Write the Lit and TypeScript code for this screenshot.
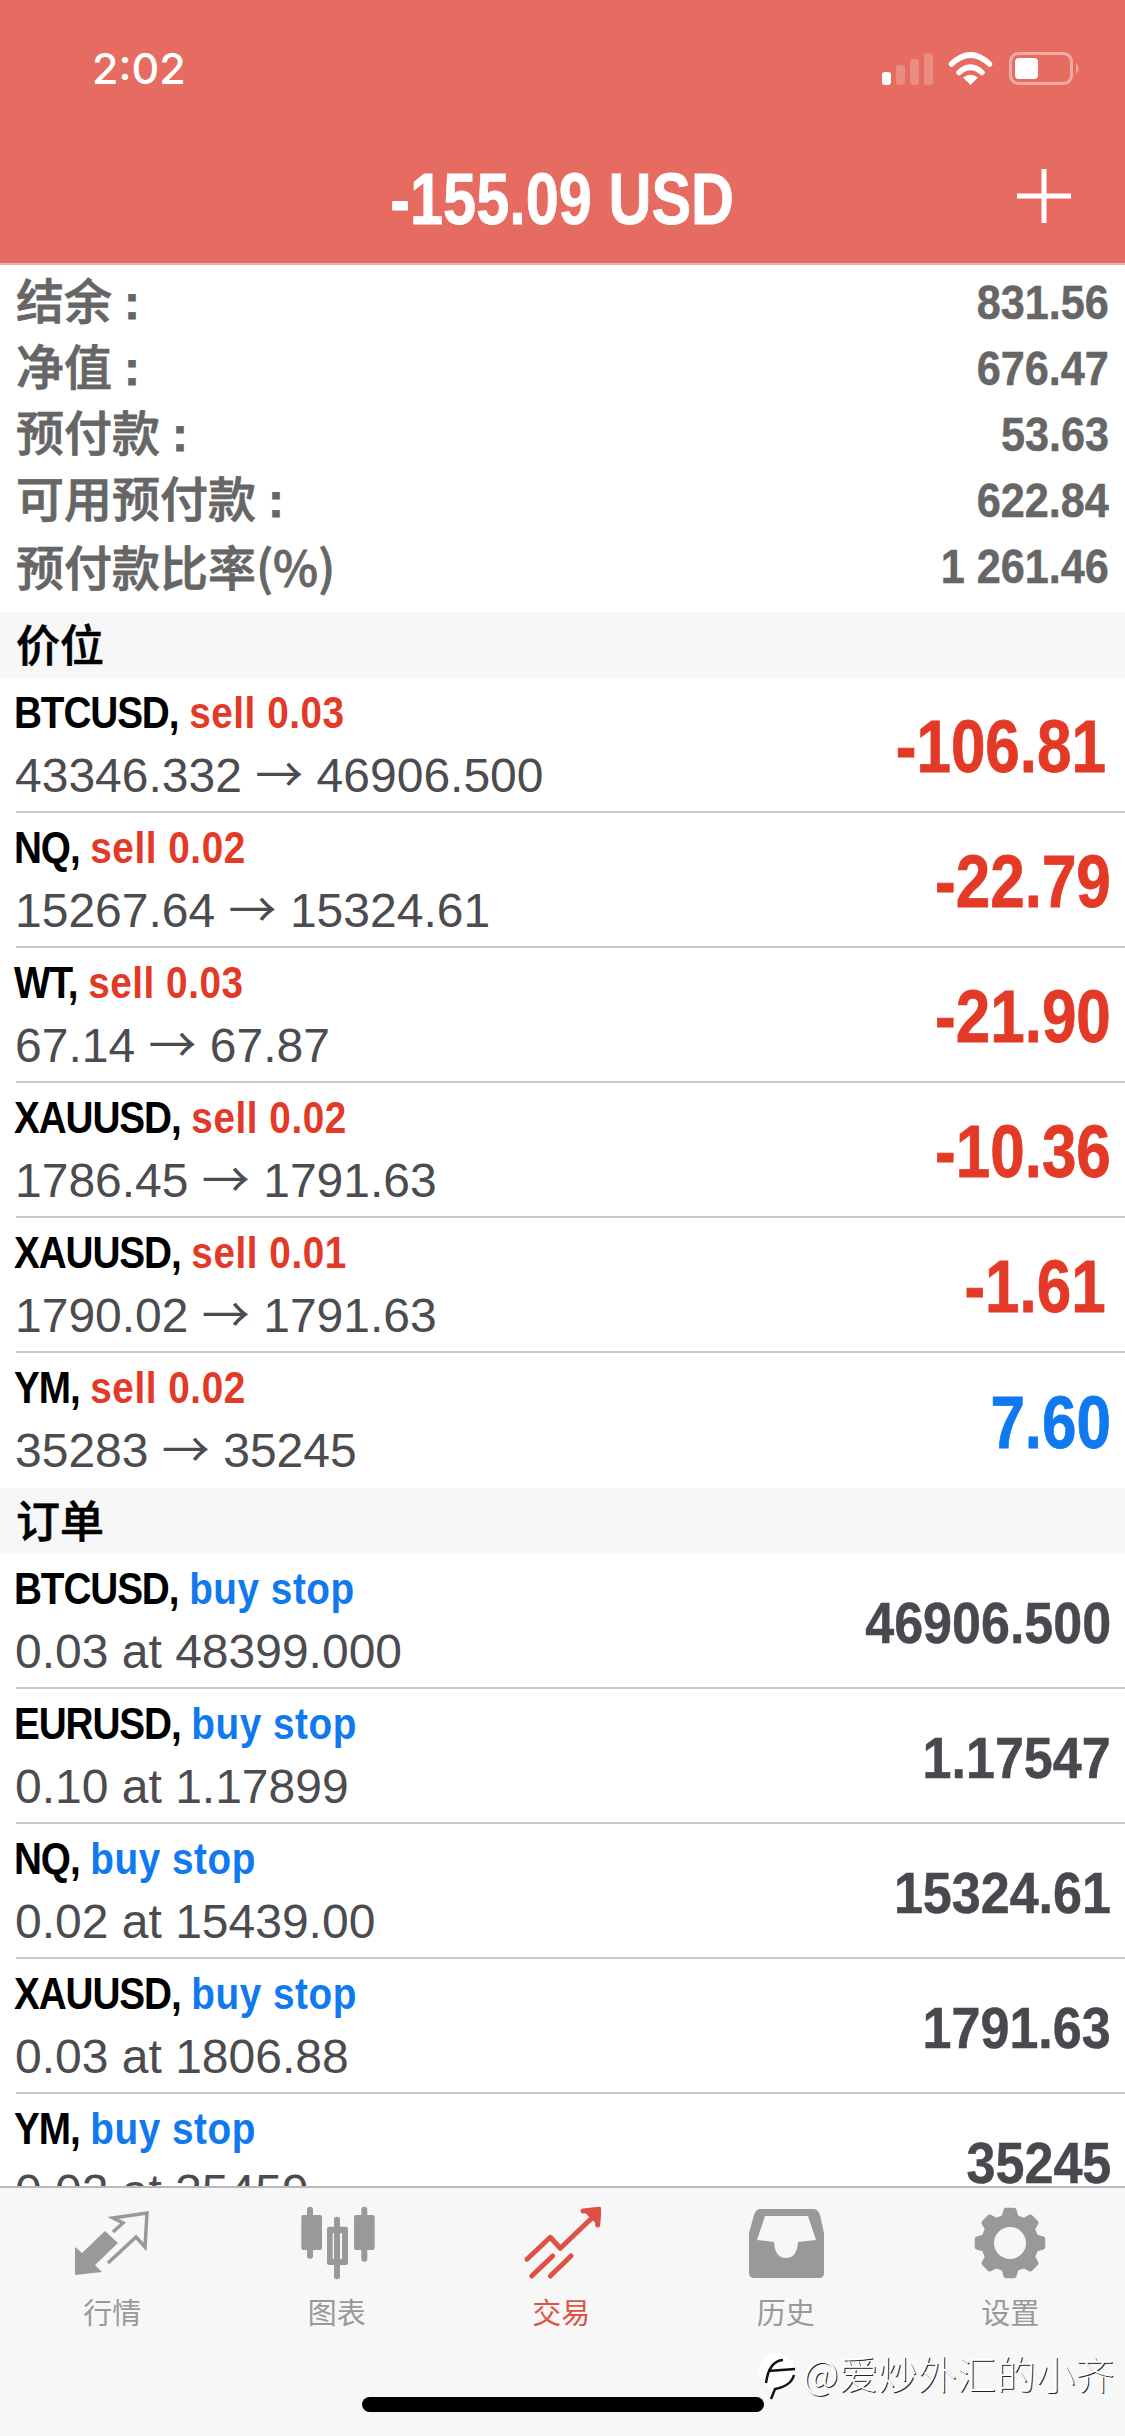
import { LitElement, html, css, svg } from "lit";
import { customElement } from "lit/decorators.js";

type Pos = { sym: string; side: string; from: string; to: string; val: string; pos: boolean };
type Ord = { sym: string; at: string; val: string };

const positions: Pos[] = [
  { sym: "BTCUSD", side: "sell 0.03", from: "43346.332", to: "46906.500", val: "-106.81", pos: false },
  { sym: "NQ", side: "sell 0.02", from: "15267.64", to: "15324.61", val: "-22.79", pos: false },
  { sym: "WT", side: "sell 0.03", from: "67.14", to: "67.87", val: "-21.90", pos: false },
  { sym: "XAUUSD", side: "sell 0.02", from: "1786.45", to: "1791.63", val: "-10.36", pos: false },
  { sym: "XAUUSD", side: "sell 0.01", from: "1790.02", to: "1791.63", val: "-1.61", pos: false },
  { sym: "YM", side: "sell 0.02", from: "35283", to: "35245", val: "7.60", pos: true },
];
const orders: Ord[] = [
  { sym: "BTCUSD", at: "0.03 at 48399.000", val: "46906.500" },
  { sym: "EURUSD", at: "0.10 at 1.17899", val: "1.17547" },
  { sym: "NQ", at: "0.02 at 15439.00", val: "15324.61" },
  { sym: "XAUUSD", at: "0.03 at 1806.88", val: "1791.63" },
  { sym: "YM", at: "0.02 at 35459", val: "35245" },
];
const stats: [string, boolean, string][] = [
  ["结余", true, "831.56"],
  ["净值", true, "676.47"],
  ["预付款", true, "53.63"],
  ["可用预付款", true, "622.84"],
  ["预付款比率(%)", false, "1 261.46"],
];

function gearPath(): string {
  const pts: string[] = [];
  for (let i = 0; i < 8; i++) {
    const a = (i * Math.PI) / 4;
    const d = Math.PI / 180;
    const list: [number, number][] = [[-13, 26.5], [-7, 33], [7, 33], [13, 26.5]];
    for (const [o, r] of list) {
      const t = a + o * d - Math.PI / 2;
      pts.push(`${(40 + r * Math.cos(t)).toFixed(1)},${(38 + r * Math.sin(t)).toFixed(1)}`);
    }
  }
  return "M" + pts.join("L") + "Z";
}

const icons = [
  svg`<path d="M3 70V42l7 6 23-22 13 12-23 22 7 7z" fill="currentColor"/><path d="M41 27l10-9-10-5 34-5-2 34-9-10-28 26" fill="none" stroke="currentColor" stroke-width="3.5"/>`,
  svg`<g fill="currentColor"><rect x="10" y="1.7" width="6" height="52" rx="3"/><rect x="4.3" y="10" width="20.7" height="35" rx="2"/><rect x="37" y="11.7" width="6" height="62.6" rx="3"/><path fill-rule="evenodd" d="M32 21.7h17a2 2 0 0 1 2 2V58a2 2 0 0 1-2 2H32a2 2 0 0 1-2-2V23.700a2 2 0 0 1 2-2zM35.700 28.300V54H45V28.300z"/><rect x="64.300" y="1.700" width="6" height="55" rx="3"/><rect x="57" y="10" width="20.700" height="35" rx="2"/></g>`,
  svg`<g fill="none" stroke="currentColor" stroke-width="5" stroke-linecap="round" stroke-linejoin="round"><path d="M6 54.300L29.300 32.300 39.300 43.300 74 10"/><path d="M10.700 71L31.700 51M29.300 71L50 51"/><path d="M62 6L78 4.300 76.700 20" fill="currentColor"/></g>`,
  svg`<path fill="currentColor" fill-rule="evenodd" d="M14 4H68Q72 4 74 10L78 28V68Q78 73 73 73H8Q3 73 3 68V28L8 10Q10 4 14 4ZM19 11L11 35 28 37Q29 53 40 53T52 37L70 35 62 11Z"/>`,
  svg`<path d="${gearPath()}" fill="currentColor" stroke="currentColor" stroke-width="5" stroke-linejoin="round"/><circle cx="40" cy="38" r="16" fill="#f7f7f7"/>`,
];
const tabs = ["行情", "图表", "交易", "历史", "设置"];

@customElement("app-root")
export class AppRoot extends LitElement {
  static styles = css`
    :host { display: block; width: 1125px; height: 2436px; position: relative; overflow: hidden; background: #fff;
      font-family: "Liberation Sans", "Noto Sans CJK SC", sans-serif; }
    .page { display: flex; flex-direction: column; height: 100%; }
    .head { height: 265px; box-sizing: border-box; background: #e66c61; color: #fff; flex: none; border-bottom: 2px solid #e9b5ae; }
    .status { display: flex; align-items: center; height: 137px; padding: 0 44px 0 92px; box-sizing: border-box; }
    .time { font: 500 43px/1 Inter, sans-serif; margin-right: auto; }
    .signal { display: flex; align-items: flex-end; gap: 5px; height: 32px; margin-right: 15px; }
    .signal i { display: block; width: 9px; border-radius: 3px; background: rgba(255,255,255,.22); }
    .signal i:first-child { background: #fff; }
    .wifi { width: 45px; height: 33px; margin-right: 16px; }
    .batt { width: 72px; height: 33px; }
    .nav { position: relative; display: flex; justify-content: center; align-items: center; height: 126px; padding-bottom: 2px; box-sizing: border-box; }
    .title { display: inline-block; font: bold 72px/1 "Liberation Sans", sans-serif; -webkit-text-stroke: .8px #fff; transform: scaleX(.826); white-space: nowrap; }
    .plus { position: absolute; right: 54px; top: 32px; width: 54px; height: 54px; }
    .stats { padding: 5px 16px 12px; flex: none; }
    .stat { display: flex; justify-content: space-between; align-items: center; height: 66px; color: #666; }
    .lab { font: 500 48px/1 "Noto Sans CJK SC", sans-serif; -webkit-text-stroke: .8px #666; margin-bottom: 5px; }
    .lab .colon { font-family: "Liberation Sans", sans-serif; font-weight: bold; margin-left: 12px; }
    .num { display: inline-block; font: bold 48px/1 "Liberation Sans", sans-serif; -webkit-text-stroke: .5px #666; transform: scaleX(.9); transform-origin: right center; white-space: nowrap; }
    .scroll { flex: 1; overflow: hidden; min-height: 0; }
    .sec { height: 66px; box-sizing: border-box; padding: 0 0 5px 16px; background: #f7f7f7; display: flex; align-items: center; color: #000;
      font: 500 44px/1 "Noto Sans CJK SC", sans-serif; -webkit-text-stroke: .6px #000; }
    .row { height: 135px; box-sizing: border-box; margin-left: 16px; padding: 5px 14px 0 0; display: flex; justify-content: space-between; border-bottom: 2px solid #c8c8c8; }
    .row.end { border-bottom: 0; }
    .l1 { display: block; width: max-content; font: bold 44px/62px "Liberation Sans", sans-serif; color: #000; white-space: nowrap; transform: scaleX(.88); transform-origin: left center; margin: -1px 0 1px -2px; }
    .sym { letter-spacing: -1.25px; }
    .side { letter-spacing: .6px; }
    .l2 { height: 62px; font: 400 48px/62px "Liberation Sans", sans-serif; color: #4b4b50; white-space: nowrap; margin-left: -1px; }
    .arrow { font-family: "Noto Sans CJK SC", sans-serif; line-height: 0; }
    .red { color: #e33a27; }
    .blue { color: #1079ef; }
    .big { display: inline-block; font: bold 74px/1 "Liberation Sans", sans-serif; -webkit-text-stroke: .8px currentColor; align-self: center; transform: scaleX(.8375); transform-origin: right center; white-space: nowrap; }
    .big.one { margin-right: 5px; }
    .mid { display: inline-block; font: bold 58px/1 "Liberation Sans", sans-serif; -webkit-text-stroke: .5px #48484e; color: #48484e; align-self: center; transform: scaleX(.897); transform-origin: right center; white-space: nowrap; }
    .tabs { height: 250px; flex: none; box-sizing: border-box; background: #f7f7f7; border-top: 2px solid #b9b9b9;
      display: grid; grid-template-columns: repeat(5, 224.500px); align-content: start; }
    .tab { display: flex; flex-direction: column; align-items: center; color: #999; padding-top: 17px; }
    .tab.on { color: #dd5244; }
    .tab svg { width: 80px; height: 80px; display: block; }
    .tab span { font: 400 29px/1 "Noto Sans CJK SC", sans-serif; margin-top: 12px; }
    .home { position: absolute; left: 362px; top: 2397px; width: 402px; height: 15px; background: #000; border-radius: 8px; }
    .mark { position: absolute; left: 757px; top: 2353px; display: flex; align-items: center; gap: 4px; }
    .mark svg { width: 42px; height: 48px; display: block; }
    .mark span { font: 300 39px/1 "Noto Sans CJK SC", sans-serif; letter-spacing: .4px; color: #fff; text-shadow: 1px 1px 0 #222; margin-top: -10px; white-space: nowrap; }
  `;

  render() {
    return html`<div class="page">
      <div class="head">
        <div class="status">
          <span class="time">2:02</span>
          <div class="signal"><i style="height:13px"></i><i style="height:20px"></i><i style="height:26px"></i><i style="height:32px"></i></div>
          <svg class="wifi" viewBox="0 0 45 33"><g fill="none" stroke="#fff" stroke-width="5.500" stroke-linecap="round"><path d="M3.500 12Q22.500-6 41.500 12"/><path d="M11 20.500Q22.500 10 34 20.500"/></g><path d="M22.500 33L15 25.500Q22.500 20 30 25.500Z" fill="#fff"/></svg>
          <svg class="batt" viewBox="0 0 72 33"><rect x="1.500" y="1.500" width="61" height="30" rx="8" fill="none" stroke="#fff" stroke-opacity=".42" stroke-width="3"/><rect x="6" y="6" width="23" height="21" rx="4" fill="#fff"/><path d="M67 11q5 5.500 0 11z" fill="#fff" fill-opacity=".42"/></svg>
        </div>
        <div class="nav">
          <span class="title">-155.09 USD</span>
          <svg class="plus" viewBox="0 0 54 54"><path d="M27 0V54M0 27H54" stroke="#fff" stroke-width="5"/></svg>
        </div>
      </div>
      <div class="stats">
        ${stats.map(([l, c, v]) => html`<div class="stat"><span class="lab">${l}${c ? html`<span class="colon">:</span>` : ""}</span><span class="num">${v}</span></div>`)}
      </div>
      <div class="scroll">
        <div class="sec">价位</div>
        ${positions.map((p, i) => html`<div class="row ${i === positions.length - 1 ? "end" : ""}">
          <div><div class="l1"><span class="sym">${p.sym},</span> <span class="side red">${p.side}</span></div><div class="l2">${p.from} <span class="arrow">→</span> ${p.to}</div></div>
          <span class="big ${p.pos ? "blue" : "red"} ${p.val.endsWith("1") ? "one" : ""}">${p.val}</span>
        </div>`)}
        <div class="sec">订单</div>
        ${orders.map((o) => html`<div class="row">
          <div><div class="l1"><span class="sym">${o.sym},</span> <span class="side blue">buy stop</span></div><div class="l2">${o.at}</div></div>
          <span class="mid">${o.val}</span>
        </div>`)}
      </div>
      <div class="tabs">
        ${tabs.map((t, i) => html`<div class="tab ${i === 2 ? "on" : ""}"><svg viewBox="0 0 80 80">${icons[i]}</svg><span>${t}</span></div>`)}
      </div>
    </div>
    <div class="home"></div>
    <div class="mark">
      <svg viewBox="0 0 42 48"><circle cx="20" cy="18" r="18" fill="#fff"/><path d="M37 22Q34 33 18 36L14 46" fill="none" stroke="#111" stroke-width="2.500"/><path d="M9 30Q12 8 26 7M11 18L38 16" fill="none" stroke="#111" stroke-width="2.500"/></svg>
      <span>@爱炒外汇的小齐</span>
    </div>`;
  }
}
